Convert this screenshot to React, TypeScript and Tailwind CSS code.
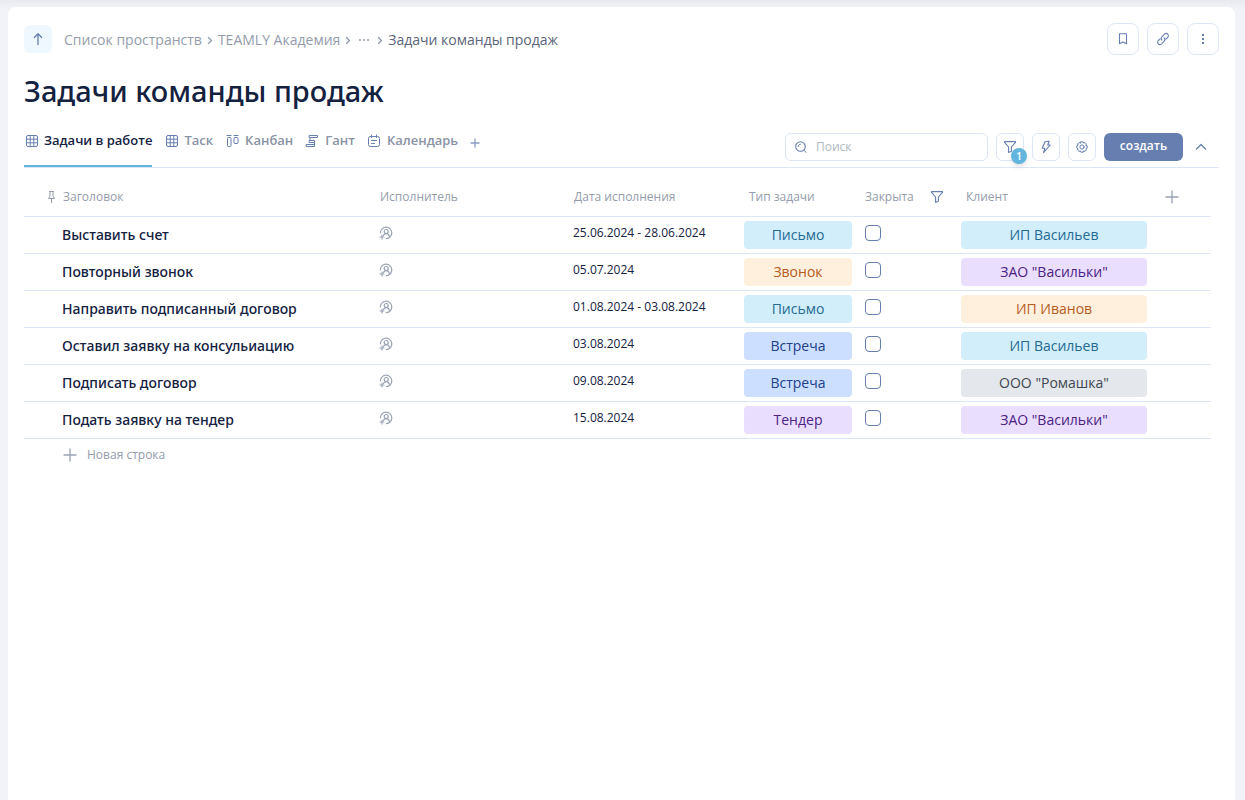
import type { ComponentType, ReactNode } from 'react';
import { clsx } from 'clsx';

type IconProps = { className?: string };

function Icon({ className, children, size = 14 }: IconProps & { children: ReactNode; size?: number }) {
  return (
    <svg
      viewBox={`0 0 ${size} ${size}`}
      width={size}
      height={size}
      fill="none"
      stroke="currentColor"
      strokeLinecap="round"
      strokeLinejoin="round"
      aria-hidden="true"
      className={clsx('shrink-0', className)}
    >
      {children}
    </svg>
  );
}

function ArrowUpIcon() {
  return (
    <Icon size={16}>
      <path d="M8 13.5V3M4.3 6.5L8 2.8l3.7 3.7" strokeWidth="1.3" />
    </Icon>
  );
}

function ChevronRightIcon() {
  return (
    <Icon size={8} className="text-[#8f98ab]">
      <path d="M2.5 1.5L5.5 4.5L2.5 7.5" strokeWidth="1.2" />
    </Icon>
  );
}

function BookmarkIcon() {
  return (
    <Icon>
      <path d="M3.5 1.8h7v10L7 10l-3.5 1.8z" strokeWidth="1.1" />
    </Icon>
  );
}

function LinkIcon() {
  return (
    <Icon>
      <path
        d="M5.9 8.1c-1-1-1-2.3-.1-3.2l2.6-2.7c1-.9 2.4-.9 3.3 0s.9 2.2 0 3.1L10 7M8.1 5.9c1 1 1 2.3.1 3.2l-2.6 2.7c-1 .9-2.4.9-3.3 0s-.9-2.2 0-3.1L4 7"
        strokeWidth="1.1"
      />
    </Icon>
  );
}

function DotsIcon() {
  return (
    <Icon>
      <path d="M6 2h2v2H6zM6 6h2v2H6zM6 10h2v2H6z" fill="currentColor" stroke="none" />
    </Icon>
  );
}

function GridIcon({ className }: IconProps) {
  return (
    <Icon className={className}>
      <rect x="2.5" y="1.5" width="11" height="11" rx="1.5" />
      <path d="M6.2 1.5v11M9.8 1.5v11M2.5 5.2h11M2.5 8.8h11" />
    </Icon>
  );
}

function KanbanIcon({ className }: IconProps) {
  return (
    <Icon className={className}>
      <path d="M2 1.5h4M9 1.5h4" />
      <rect x="2.5" y="3.5" width="3.5" height="9" rx="1" />
      <rect x="9" y="3.5" width="4" height="6" rx="1" />
    </Icon>
  );
}

function GanttIcon({ className }: IconProps) {
  return (
    <Icon className={className}>
      <rect x="4.5" y="1.5" width="8" height="2" />
      <rect x="4.5" y="6.5" width="5" height="2" />
      <rect x="1.5" y="10.5" width="8" height="2" />
      <path d="M5 3.5v3M9.5 8.5v2" />
    </Icon>
  );
}

function CalendarIcon({ className }: IconProps) {
  return (
    <Icon className={className}>
      <rect x="1.5" y="2.5" width="11" height="10" rx="2" />
      <path d="M4.5 1v2.5M9.5 1v2.5M4.5 6.5h5M4.5 9.5h3" />
    </Icon>
  );
}

function SearchIcon({ className }: IconProps) {
  return (
    <Icon className={className}>
      <circle cx="6.5" cy="6.5" r="4.8" strokeWidth="1.1" />
      <path d="M4.2 6.6c0-1.4.9-2.4 2.3-2.4M10.4 10.6l1.6 1.8" />
    </Icon>
  );
}

function FilterIcon() {
  return (
    <Icon>
      <path d="M1.5 1.6h11v.8L8.4 7v4.2L5.6 12.4V7L1.5 2.4z" strokeWidth="1.1" />
    </Icon>
  );
}

function BoltIcon() {
  return (
    <Icon>
      <path d="M6 1.8L10.2 1.3 8.8 5h2.4L4.6 12.6l1.2-4.3H3.2z" strokeWidth="1.1" />
    </Icon>
  );
}

function GearIcon() {
  return (
    <Icon>
      <circle cx="7" cy="7" r="2.1" />
      <path d="M5.9 1.8h2.2l.5 1.3 1.4-.5 1.4 1.4-.5 1.4 1.3.5v2.2l-1.3.5.5 1.4-1.4 1.4-1.4-.5-.5 1.3H5.9l-.5-1.3-1.4.5-1.4-1.4.5-1.4-1.3-.5V5.9l1.3-.5-.5-1.4 1.4-1.4 1.4.5z" />
    </Icon>
  );
}

function PinIcon() {
  return (
    <Icon>
      <path d="M4.5 1.5h4M5 1.5V6L3.5 8.5h6L8 6V1.5M6.5 8.5v4" />
    </Icon>
  );
}

function AddPersonIcon() {
  return (
    <Icon>
      <circle cx="7.2" cy="5.5" r="2" strokeWidth="1.2" />
      <path
        d="M1.4 6.8A5.7 5.7 0 1 1 7.4 12.6M4.4 9.6c.5-1.3 1.6-2 2.8-2 1.5 0 2.6.9 3 2.4"
        strokeWidth="1.2"
      />
      <path d="M3 9v4M1 11h4" strokeWidth="1.2" />
    </Icon>
  );
}

function PlusIcon({ className }: IconProps) {
  return (
    <Icon className={className}>
      <path d="M7 1v12M1 7h12" strokeWidth="1.3" />
    </Icon>
  );
}

const TONES = {
  blue: 'bg-[#d2eefb] text-[#256a93]',
  orange: 'bg-[#fff0dd] text-[#b85b22]',
  indigo: 'bg-[#cddfff] text-[#20408a]',
  purple: 'bg-[#eadeff] text-[#4b2283]',
  gray: 'bg-[#e4e7eb] text-[#3f4752]',
};

type Tone = keyof typeof TONES;

type Task = {
  title: string;
  date: string;
  type: [string, Tone];
  client: [string, Tone];
};

const TASKS: Task[] = [
  { title: 'Выставить счет', date: '25.06.2024 - 28.06.2024', type: ['Письмо', 'blue'], client: ['ИП Васильев', 'blue'] },
  { title: 'Повторный звонок', date: '05.07.2024', type: ['Звонок', 'orange'], client: ['ЗАО "Васильки"', 'purple'] },
  { title: 'Направить подписанный договор', date: '01.08.2024 - 03.08.2024', type: ['Письмо', 'blue'], client: ['ИП Иванов', 'orange'] },
  { title: 'Оставил заявку на консульиацию', date: '03.08.2024', type: ['Встреча', 'indigo'], client: ['ИП Васильев', 'blue'] },
  { title: 'Подписать договор', date: '09.08.2024', type: ['Встреча', 'indigo'], client: ['ООО "Ромашка"', 'gray'] },
  { title: 'Подать заявку на тендер', date: '15.08.2024', type: ['Тендер', 'purple'], client: ['ЗАО "Васильки"', 'purple'] },
];

const VIEWS: { label: string; icon: ComponentType<IconProps> }[] = [
  { label: 'Задачи в работе', icon: GridIcon },
  { label: 'Таск', icon: GridIcon },
  { label: 'Канбан', icon: KanbanIcon },
  { label: 'Гант', icon: GanttIcon },
  { label: 'Календарь', icon: CalendarIcon },
];

function SquareButton({ label, large, children }: { label: string; large?: boolean; children: ReactNode }) {
  return (
    <button
      type="button"
      aria-label={label}
      className={clsx(
        'relative flex shrink-0 items-center justify-center border border-[#dce6f5] text-[#667fb0]',
        large ? 'size-8 rounded-lg' : 'size-7 rounded-md',
      )}
    >
      {children}
    </button>
  );
}

function Tag({ value: [label, tone] }: { value: [string, Tone] }) {
  return <span className={clsx('block h-7 rounded text-center text-sm leading-7', TONES[tone])}>{label}</span>;
}

function Header() {
  return (
    <header className="flex h-8 items-center justify-between">
      <div className="flex items-center gap-3">
        <button
          type="button"
          aria-label="Наверх"
          className="flex size-7 items-center justify-center rounded-md bg-[#eff8ff] text-[#667fb0]"
        >
          <ArrowUpIcon />
        </button>
        <nav className="flex items-center gap-1 pt-0.5 text-sm text-[#949cab]">
          <a href="#spaces">Список пространств</a>
          <ChevronRightIcon />
          <a href="#academy">TEAMLY Академия</a>
          <ChevronRightIcon />
          <button type="button" aria-label="Показать путь" className="flex w-4 justify-center">
            <Icon>
              <path d="M2 7h2M6 7h2M10 7h2" strokeLinecap="butt" strokeWidth="1.6" />
            </Icon>
          </button>
          <ChevronRightIcon />
          <a href="#tasks" className="text-[#5b6579]">
            Задачи команды продаж
          </a>
        </nav>
      </div>
      <div className="flex gap-2">
        <SquareButton label="В закладки" large>
          <BookmarkIcon />
        </SquareButton>
        <SquareButton label="Скопировать ссылку" large>
          <LinkIcon />
        </SquareButton>
        <SquareButton label="Ещё" large>
          <DotsIcon />
        </SquareButton>
      </div>
    </header>
  );
}

function Toolbar() {
  return (
    <div className="flex items-start justify-between border-b border-[#dce6f5]">
      <div className="flex gap-3 text-[13px] font-semibold text-[#8a93a3]">
        {VIEWS.map(({ label, icon: ViewIcon }, index) => (
          <button
            key={label}
            type="button"
            className={clsx(
              'flex h-[52px] items-center gap-1.5 border-b-2 pt-0.5',
              index === 0 ? 'border-[#62b5dd] text-[#14213f]' : 'border-transparent',
            )}
          >
            <ViewIcon className="text-[#667fb0]" />
            {label}
          </button>
        ))}
        <button type="button" aria-label="Добавить вид" className="flex h-[52px] items-center pt-1 text-[#8b9cc2]">
          <Icon size={10}>
            <path d="M5 1v8M1 5h8" strokeWidth="1.3" />
          </Icon>
        </button>
      </div>
      <div className="flex items-center gap-2 pt-[18px]">
        <label className="flex h-7 w-[203px] items-center gap-2 rounded-md border border-[#dce6f5] px-2 text-[#667fb0]">
          <SearchIcon />
          <input
            type="text"
            aria-label="Поиск"
            placeholder="Поиск"
            className="min-w-0 flex-1 text-xs outline-none placeholder:text-[#adb8bf]"
          />
        </label>
        <SquareButton label="Фильтр">
          <FilterIcon />
          <span className="absolute -right-1 -bottom-1 flex size-4 items-center justify-center rounded-full bg-[#62b5dd] text-[10px] font-semibold text-white shadow-md">
            1
          </span>
        </SquareButton>
        <SquareButton label="Автоматизации">
          <BoltIcon />
        </SquareButton>
        <SquareButton label="Настройки">
          <GearIcon />
        </SquareButton>
        <button
          type="button"
          className="h-7 w-[79px] rounded-md bg-[#667fb0] pb-0.5 text-xs font-semibold text-white"
        >
          создать
        </button>
        <button type="button" aria-label="Свернуть" className="flex w-7 pl-[3px] text-[#667fb0]">
          <Icon>
            <path d="M2.5 9L7 4.5L11.5 9" strokeWidth="1.3" />
          </Icon>
        </button>
      </div>
    </div>
  );
}

function TaskTable() {
  return (
    <div className="pr-2">
      <table className="w-full table-fixed border-separate border-spacing-0">
        <colgroup>
          <col />
          <col className="w-[194px]" />
          <col className="w-[175px]" />
          <col className="w-[116px]" />
          <col className="w-[101px]" />
          <col className="w-[194px]" />
          <col className="w-[60px]" />
        </colgroup>
        <thead>
          <tr className="h-[49px] text-left text-xs text-[#949cab] [&>th]:border-b [&>th]:border-[#dce6f5] [&>th]:px-[9px] [&>th]:pt-2.5 [&>th]:font-normal">
            <th>
              <div className="flex items-center gap-1 pl-3">
                <PinIcon />
                Заголовок
              </div>
            </th>
            <th>Исполнитель</th>
            <th>Дата исполнения</th>
            <th>Тип задачи</th>
            <th>
              <div className="flex items-center justify-between pr-1">
                Закрыта
                <button type="button" aria-label="Фильтр по столбцу" className="text-[#667fb0]">
                  <FilterIcon />
                </button>
              </div>
            </th>
            <th>Клиент</th>
            <th>
              <button type="button" aria-label="Добавить столбец" className="flex pl-[5px] text-[#99a2b3]">
                <PlusIcon />
              </button>
            </th>
          </tr>
        </thead>
        <tbody>
          {TASKS.map((task) => (
            <tr
              key={task.title}
              className="h-[37px] text-[#14213f] [&>td]:border-b [&>td]:border-[#dce6f5] [&>td]:p-0"
            >
              <td>
                <div className="truncate pl-[38px] font-['Noto_Sans','Open_Sans',sans-serif] text-sm font-medium">
                  {task.title}
                </div>
              </td>
              <td>
                <button type="button" aria-label="Назначить исполнителя" className="flex pb-1 pl-2 text-[#99a2b3]">
                  <AddPersonIcon />
                </button>
              </td>
              <td>
                <div className="pb-1 pl-2 text-xs">{task.date}</div>
              </td>
              <td>
                <div className="px-1">
                  <Tag value={task.type} />
                </div>
              </td>
              <td>
                <div className="flex pb-1 pl-[9px]">
                  <input
                    type="checkbox"
                    aria-label={`Закрыта: ${task.title}`}
                    className="size-4 appearance-none rounded border border-[#667fb0] checked:bg-[#667fb0]"
                  />
                </div>
              </td>
              <td>
                <div className="px-1">
                  <Tag value={task.client} />
                </div>
              </td>
              <td />
            </tr>
          ))}
        </tbody>
      </table>
      <button type="button" className="ml-[39px] flex h-8 items-center gap-2.5 text-xs text-[#949cab]">
        <PlusIcon className="text-[#99a2b3]" />
        Новая строка
      </button>
    </div>
  );
}

export default function App() {
  return (
    <div className="flex min-h-screen bg-[#f2f3f8] bg-linear-to-b from-[#e9eaef] to-[#f2f3f8] to-[8px] pt-[7px] pr-2.5 pl-2 font-['Open_Sans','Noto_Sans',sans-serif]">
      <main className="min-w-0 flex-1 rounded-t-lg bg-white px-4 pt-4">
        <Header />
        <h1 className="pt-3 font-['Noto_Sans','Open_Sans',sans-serif] text-[29px] leading-[48px] font-medium text-[#14213f]">
          Задачи команды продаж
        </h1>
        <Toolbar />
        <TaskTable />
      </main>
    </div>
  );
}
